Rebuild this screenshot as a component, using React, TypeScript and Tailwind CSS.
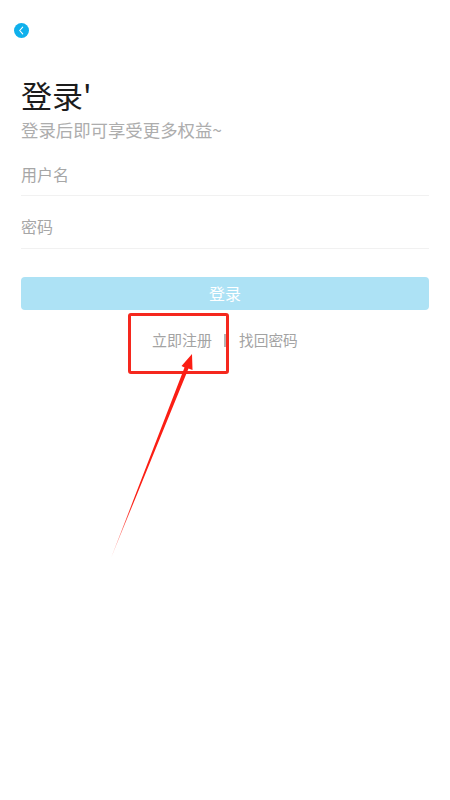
export default function App() {
  return (
    <div className="relative w-[450px] h-[800px] bg-white overflow-hidden font-['Noto_Sans_CJK_SC','Noto_Sans',sans-serif]">
      <div className="pt-[23px] pl-[14px]">
        <button className="flex items-center justify-center w-[15px] h-[15px] rounded-full bg-[#0fb0ec]">
          <svg width="9" height="9" viewBox="0 0 9 9" fill="none">
            <path d="M5.7 1.2 L2.7 4.5 L5.7 7.8" stroke="#ffffff" strokeWidth="1.1" strokeLinecap="round" strokeLinejoin="round" />
          </svg>
        </button>
      </div>
      <div className="px-[21px]">
        <h1 className="mt-[36px] text-[31px] leading-[42px] font-normal text-[#1c1c1c]">登录'</h1>
        <p className="mt-[1px] text-[17.4px] leading-[26px] text-[#adadad]">登录后即可享受更多权益~</p>
        <div className="mt-[9px] h-[44px] border-b border-[#f1f1f1] flex items-center text-[16px] text-[#a6a6a6]">用户名</div>
        <div className="mt-[8px] h-[45px] border-b border-[#f1f1f1] flex items-center text-[16px] text-[#a6a6a6]">密码</div>
        <button className="mt-[28px] w-[408px] h-[33px] pb-[2px] rounded-[4px] bg-[#ade2f5] flex items-center justify-center text-[16px] text-white">登录</button>
        <div className="mt-[19px] flex items-center text-[15px] leading-[22px] text-[#a3a3a3] pl-[131px]">
          <span>立即注册</span>
          <span className="ml-[12px] w-[2px] h-[13px] bg-[#b5b5b5]"></span>
          <span className="ml-[13px] text-[14.7px]">找回密码</span>
        </div>
      </div>
      <div className="absolute left-[128px] top-[313px] w-[101px] h-[61px] border-[3px] border-[#f5281e] rounded-[3px]"></div>
      <svg className="absolute left-0 top-0" width="450" height="800" viewBox="0 0 450 800" fill="none">
        <defs>
          <linearGradient id="arrowFade" x1="111" y1="558" x2="135" y2="500" gradientUnits="userSpaceOnUse">
            <stop offset="0" stopColor="#ff2a1e" stopOpacity="0.4" />
            <stop offset="1" stopColor="#fb1e14" />
          </linearGradient>
        </defs>
        <path d="M111 558 L184.5 367.5 L181.5 366 L192 354 L192.5 370 L188.5 368.5 Z" fill="url(#arrowFade)" />
      </svg>
    </div>
  );
}
